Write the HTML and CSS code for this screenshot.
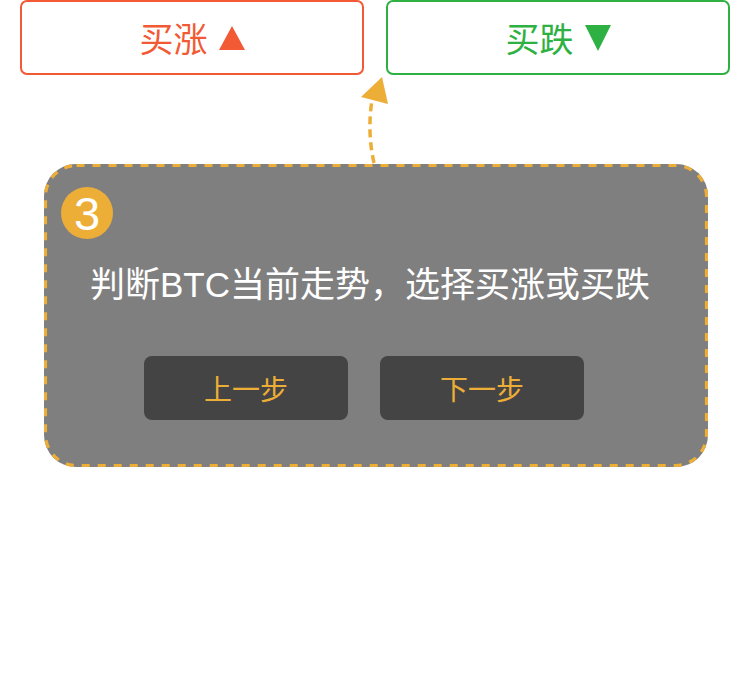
FILE: index.html
```html
<!DOCTYPE html>
<html lang="zh-CN">
<head>
<meta charset="utf-8">
<title>Guide</title>
<link rel="stylesheet" href="styles.css">
</head>
<body>
<div class="stage">
  <div class="trade-row">
    <div class="trade up">
      <span>买涨</span>
      <svg class="tri" width="26" height="24" viewBox="0 0 26 24"><polygon points="13,0 26,24 0,24" fill="#f15a35"/></svg>
    </div>
    <div class="trade down">
      <span>买跌</span>
      <svg class="tri" width="26" height="26" viewBox="0 0 26 26"><polygon points="0,0 26,0 13,26" fill="#2eb142"/></svg>
    </div>
  </div>

  <svg class="pointer" width="40" height="92" viewBox="0 0 40 92">
    <path d="M19 89 Q12 58 17 26" fill="none" stroke="#edae38" stroke-width="3.5" stroke-dasharray="8 5"/>
    <polygon points="27,3 6,23 33,30" fill="#edae38"/>
  </svg>

  <div class="card">
    <svg class="card-border" width="664" height="303" viewBox="0 0 664 303">
      <rect x="1.5" y="1.5" width="661" height="300" rx="31" ry="31" fill="none" stroke="#edae38" stroke-width="3.2" stroke-dasharray="8 8"/>
    </svg>
    <div class="badge">3</div>
    <p class="tip">判断BTC当前走势，选择买涨或买跌</p>
    <div class="actions">
      <div class="btn">上一步</div>
      <div class="btn">下一步</div>
    </div>
  </div>
</div>
</body>
</html>
```

FILE: styles.css
```css
html, body {
  margin: 0;
  padding: 0;
  background: #ffffff;
}

body {
  font-family: "Liberation Sans", "Noto Sans CJK SC", sans-serif;
}

.stage {
  position: relative;
  width: 750px;
  height: 686px;
}

.trade-row {
  display: flex;
  gap: 22px;
  padding: 0 20px;
}

.trade {
  flex: 1;
  height: 75px;
  box-sizing: border-box;
  border: 2px solid;
  border-radius: 7px;
  display: flex;
  align-items: center;
  justify-content: center;
  gap: 11px;
  font-size: 34px;
  line-height: 1;
}

.trade span {
  font-family: "Noto Sans CJK SC", sans-serif;
}

.trade.up {
  color: #f15a35;
  border-color: #f15a35;
}

.trade.down {
  color: #2eb142;
  border-color: #2eb142;
}

.tri {
  display: block;
}

.pointer {
  position: absolute;
  left: 355px;
  top: 74px;
}

.card {
  position: relative;
  margin: 89px 0 0 44px;
  width: 664px;
  height: 303px;
  box-sizing: border-box;
  border-radius: 32px;
  background: #7f7f7f;
  padding: 23px 12px 0 0;
  display: flex;
  flex-direction: column;
}

.card-border {
  position: absolute;
  left: 0;
  top: 0;
}

.badge {
  margin-left: 17px;
  width: 52px;
  height: 52px;
  border-radius: 50%;
  background: #edae38;
  color: #ffffff;
  font-size: 47px;
  line-height: 54px;
  text-align: center;
}

.tip {
  margin: 26px 0 0;
  height: 40px;
  line-height: 40px;
  font-size: 35px;
  color: #ffffff;
  text-align: center;
  white-space: nowrap;
}

.actions {
  margin-top: 51px;
  display: flex;
  justify-content: center;
  gap: 32px;
  padding-right: 12px;
}

.btn {
  width: 204px;
  height: 64px;
  border-radius: 8px;
  background: #444444;
  color: #edae38;
  font-family: "Noto Sans CJK SC", sans-serif;
  font-size: 28px;
  display: flex;
  align-items: center;
  justify-content: center;
}
```
